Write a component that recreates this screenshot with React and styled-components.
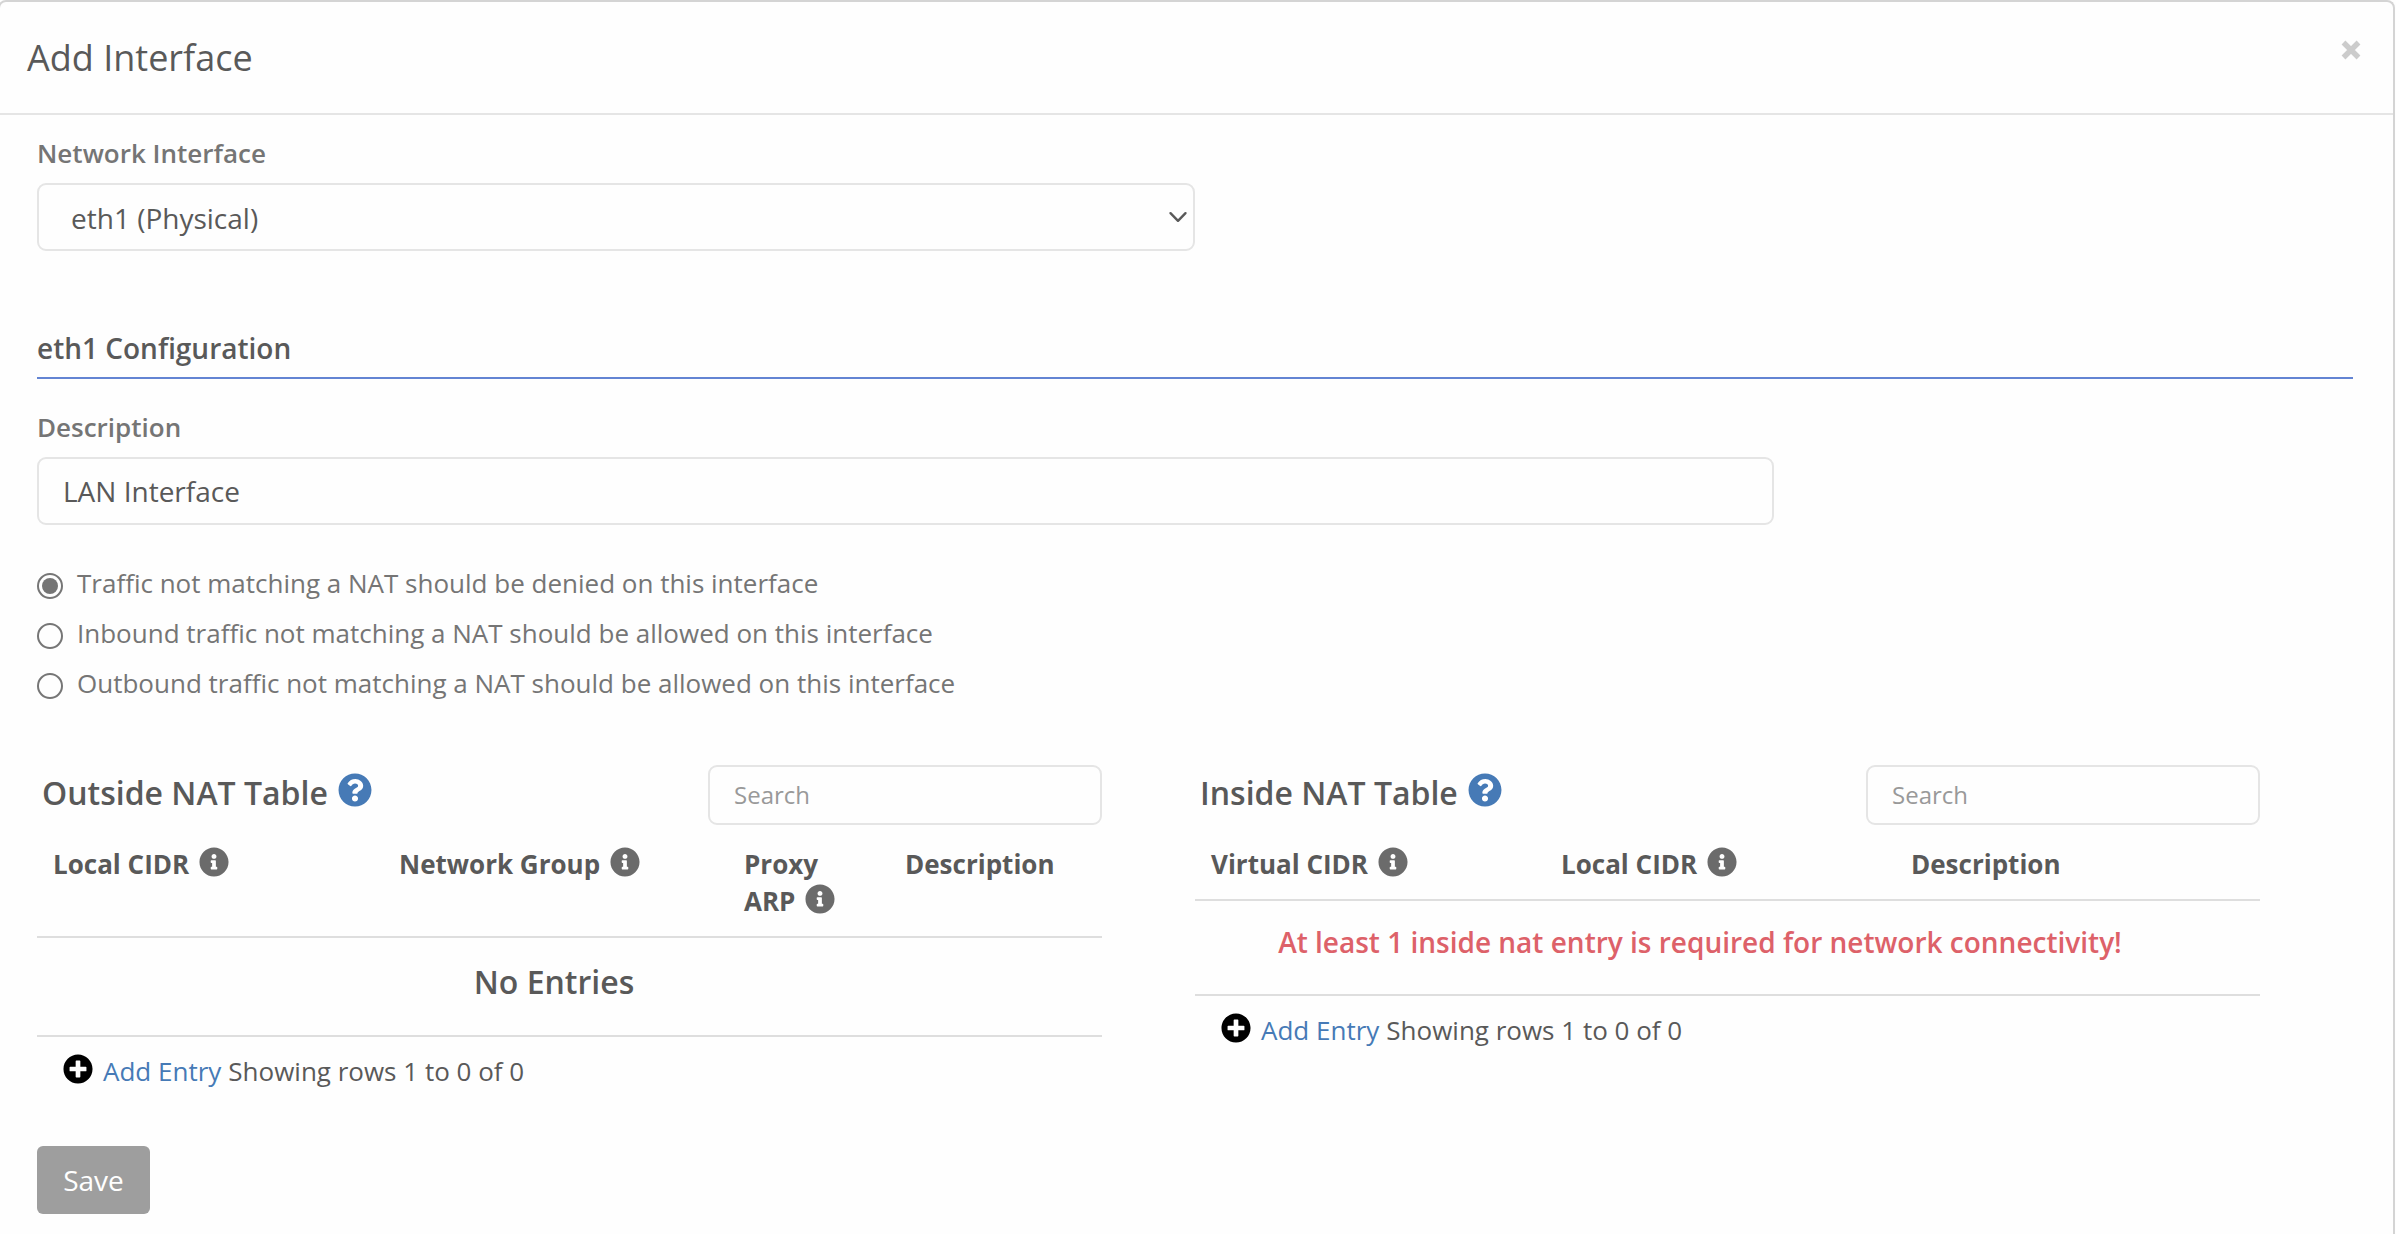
import React from "react";
import styled, { createGlobalStyle } from "styled-components";
import { FaQuestionCircle, FaInfoCircle, FaPlusCircle } from "react-icons/fa";

const GlobalStyle = createGlobalStyle`
  *, *::before, *::after { box-sizing: border-box; }
  body {
    margin: 0;
    background: #fefefe;
    color: #595959;
    font-family: "Open Sans", "Noto Sans", sans-serif;
    font-size: 26px;
    line-height: 37px;
  }
  h1, h2, h3, p { margin: 0; }
  input, select, button { font-family: inherit; }
`;

const Panel = styled.main`
  width: 2397px;
  height: 1234px;
  margin-left: -2px;
  border: 2px solid #d4d4d4;
  border-bottom: 0;
  border-radius: 8px 8px 0 0;
`;

const Header = styled.header`
  display: flex;
  justify-content: space-between;
  align-items: flex-start;
  height: 113px;
  padding: 31px 32px 0 27px;
  border-bottom: 2px solid #e5e5e5;
`;

const Title = styled.h1`
  font-size: 36px;
  line-height: 50px;
  font-weight: 400;
`;

const CloseButton = styled.button`
  display: flex;
  margin-top: 7px;
  padding: 0;
  border: 0;
  background: none;
  color: #cccccc;
`;

const Body = styled.div`
  padding: 20px 40px 0 37px;
`;

const FieldLabel = styled.label`
  display: block;
  margin-top: ${(p) => p.$top || 0}px;
  margin-bottom: 11px;
  color: #757575;
  font-weight: 600;
`;

const SelectWrap = styled.div`
  position: relative;
  width: 1158px;
  height: 68px;
`;

const Select = styled.select`
  appearance: none;
  width: 100%;
  height: 68px;
  padding: 2px 60px 0 32px;
  border: 2px solid #e5e5e5;
  border-radius: 9px;
  background: #fefefe;
  color: #595959;
  font-size: 28px;
`;

const Chevron = styled.svg`
  position: absolute;
  right: 7px;
  top: 27px;
  pointer-events: none;
`;

const SectionTitle = styled.h2`
  margin-top: 77px;
  padding-bottom: 9px;
  border-bottom: 2px solid #6384d3;
  width: 2316px;
  font-size: 28px;
  line-height: 40px;
  font-weight: 600;
`;

const TextInput = styled.input`
  display: block;
  width: ${(p) => p.$width}px;
  height: ${(p) => p.$height}px;
  padding: 0 24px ${(p) => p.$lift || 0}px;
  border: 2px solid #e5e5e5;
  border-radius: 9px;
  background: #fefefe;
  color: #595959;
  font-size: ${(p) => p.$font}px;
  &::placeholder { color: #999999; opacity: 1; }
`;

const RadioGroup = styled.div`
  display: flex;
  flex-direction: column;
  margin-top: 33px;
`;

const RadioRow = styled.label`
  display: flex;
  align-items: center;
  gap: 14px;
  height: 50px;
  line-height: 50px;
  color: #757575;
`;

const Radio = styled.input`
  appearance: none;
  display: grid;
  place-items: center;
  width: 26px;
  height: 26px;
  margin: 6px 0 0;
  border: 2px solid #767676;
  border-radius: 50%;
  &:checked::before {
    content: "";
    width: 16px;
    height: 16px;
    border-radius: 50%;
    background: #757575;
  }
`;

const Tables = styled.div`
  display: grid;
  grid-template-columns: 1065px 1065px;
  column-gap: 93px;
  align-items: start;
  margin-top: 57px;
`;

const Toolbar = styled.div`
  display: flex;
  justify-content: space-between;
  align-items: flex-start;
  padding-left: 5px;
`;

const TableTitle = styled.h3`
  display: flex;
  gap: 10px;
  font-size: 32px;
  line-height: 56px;
  font-weight: 600;
`;

const HelpIcon = styled(FaQuestionCircle)`
  width: 34px;
  height: 34px;
  margin-top: 8px;
  color: #467ab6;
`;

const HeadRow = styled.div`
  display: grid;
  grid-template-columns: ${(p) => p.$columns};
  padding: 21px 0 16px 16px;
  border-bottom: 2px solid #dedede;
  font-weight: 700;
`;

const HeadCell = styled.div`
  padding-right: 32px;
`;

const NoWrap = styled.span`
  white-space: nowrap;
`;

const InfoIcon = styled(FaInfoCircle)`
  width: 30px;
  height: 30px;
  margin-left: 3px;
  vertical-align: -3px;
  color: #6b6b6b;
`;

const EmptyRow = styled.p`
  display: flex;
  justify-content: center;
  height: 99px;
  padding: 22px 31px 0 0;
  border-bottom: 2px solid #dedede;
  font-size: 32px;
  line-height: 44px;
  font-weight: 600;
`;

const AlertRow = styled(EmptyRow)`
  height: 95px;
  padding: 21px 55px 0 0;
  color: #dd6169;
  font-size: 28px;
  line-height: 40px;
`;

const Footer = styled.div`
  display: flex;
  padding: 16px 0 0 26px;
`;

const PlusIcon = styled(FaPlusCircle)`
  width: 30px;
  height: 30px;
  margin: 1px 10px 0 0;
  color: #000000;
`;

const AddLink = styled.a`
  margin-right: 7px;
  color: #467ab6;
`;

const SaveButton = styled.button`
  display: block;
  width: 113px;
  height: 68px;
  margin-top: 56px;
  padding: 0;
  border: 0;
  border-radius: 6px;
  background: #9e9e9e;
  color: #ffffff;
  font-size: 28px;
`;

const policies = [
  "Traffic not matching a NAT should be denied on this interface",
  "Inbound traffic not matching a NAT should be allowed on this interface",
  "Outbound traffic not matching a NAT should be allowed on this interface",
];

function HeadLabel({ name, info }) {
  if (!info) return <HeadCell>{name}</HeadCell>;
  const words = name.split(" ");
  const last = words.pop();
  return (
    <HeadCell>
      {words.join(" ")}{" "}
      <NoWrap>
        {last} <InfoIcon />
      </NoWrap>
    </HeadCell>
  );
}

function NatTable({ title, columns, heads, children }) {
  return (
    <section>
      <Toolbar>
        <TableTitle>
          {title}
          <HelpIcon />
        </TableTitle>
        <TextInput $width={394} $height={60} $font={24} $lift={2} placeholder="Search" />
      </Toolbar>
      <HeadRow $columns={columns}>
        {heads.map(([name, info]) => (
          <HeadLabel key={name} name={name} info={info} />
        ))}
      </HeadRow>
      {children}
      <Footer>
        <PlusIcon />
        <AddLink>Add Entry</AddLink>
        <span>Showing rows 1 to 0 of 0</span>
      </Footer>
    </section>
  );
}

export default function App() {
  return (
    <>
      <GlobalStyle />
      <Panel>
        <Header>
          <Title>Add Interface</Title>
          <CloseButton aria-label="Close">
            <svg width="20" height="20" viewBox="0 0 20 20" stroke="currentColor" strokeWidth="5.4">
              <path d="M2.5 2.5 L17.5 17.5 M17.5 2.5 L2.5 17.5" />
            </svg>
          </CloseButton>
        </Header>
        <Body>
          <FieldLabel>Network Interface</FieldLabel>
          <SelectWrap>
            <Select defaultValue="eth1">
              <option value="eth1">eth1 (Physical)</option>
            </Select>
            <Chevron width="20" height="14" viewBox="0 0 20 14" fill="none" stroke="#595959" strokeWidth="2.4" strokeLinecap="round" strokeLinejoin="round">
              <path d="M2.5 3.2 L10 10.8 L17.5 3.2" />
            </Chevron>
          </SelectWrap>
          <SectionTitle>eth1 Configuration</SectionTitle>
          <FieldLabel $top={30}>Description</FieldLabel>
          <TextInput $width={1737} $height={68} $font={28} defaultValue="LAN Interface" />
          <RadioGroup>
            {policies.map((text, i) => (
              <RadioRow key={text}>
                <Radio type="radio" name="policy" defaultChecked={i === 0} />
                {text}
              </RadioRow>
            ))}
          </RadioGroup>
          <Tables>
            <NatTable
              title="Outside NAT Table"
              columns="346px 345px 161px 1fr"
              heads={[["Local CIDR", true], ["Network Group", true], ["Proxy ARP", true], ["Description", false]]}
            >
              <EmptyRow>No Entries</EmptyRow>
            </NatTable>
            <NatTable
              title="Inside NAT Table"
              columns="350px 350px 1fr"
              heads={[["Virtual CIDR", true], ["Local CIDR", true], ["Description", false]]}
            >
              <AlertRow>At least 1 inside nat entry is required for network connectivity!</AlertRow>
            </NatTable>
          </Tables>
          <SaveButton>Save</SaveButton>
        </Body>
      </Panel>
    </>
  );
}
